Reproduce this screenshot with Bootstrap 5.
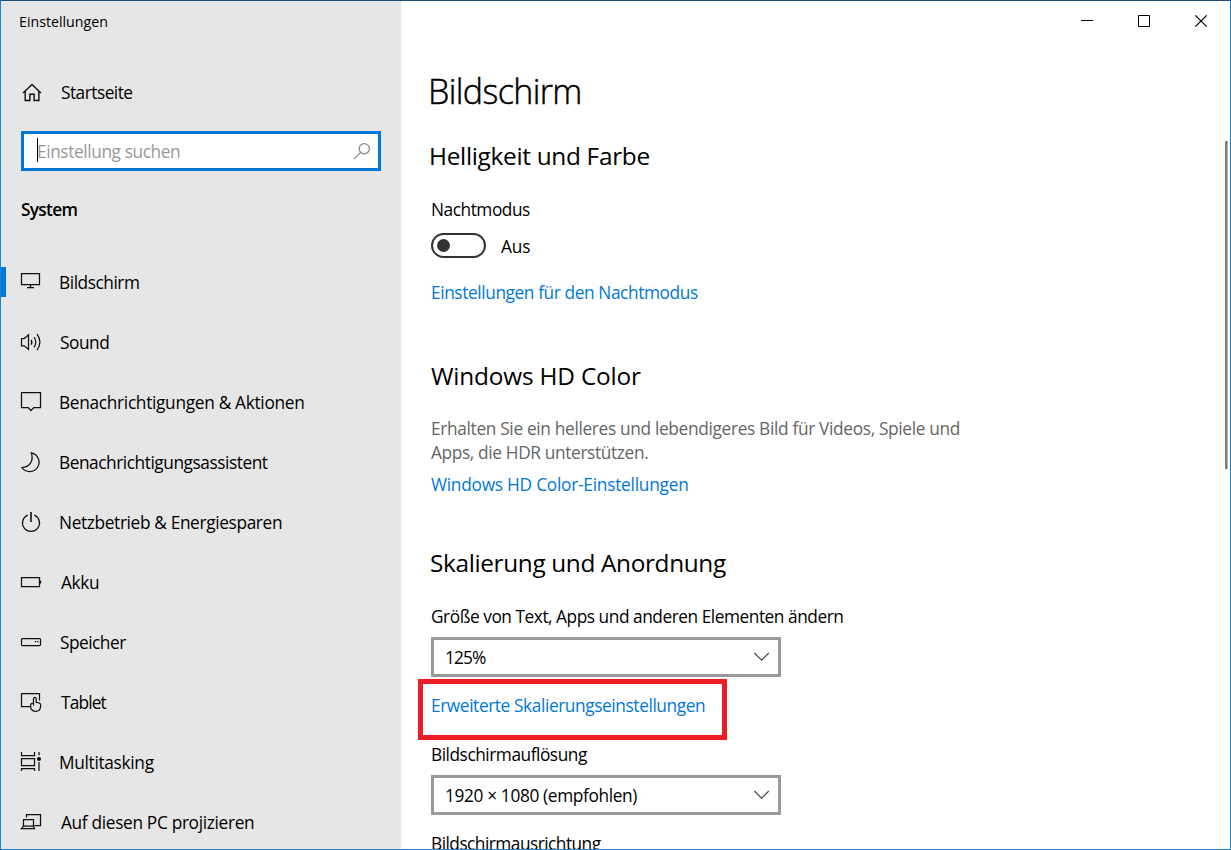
<!DOCTYPE html>
<html lang="de">
<head>
<meta charset="utf-8">
<meta name="viewport" content="width=device-width, initial-scale=1">
<title>Einstellungen</title>
<link href="https://cdn.jsdelivr.net/npm/bootstrap@5.3.0/dist/css/bootstrap.min.css" rel="stylesheet">
<style>
:root{--accent:#0078d7}
body{font-family:"Open Sans","Noto Sans",sans-serif;font-size:17.3px;line-height:24px;color:#000;background:#fff}
.win{width:1231px;height:850px;border:1px solid #1883d7;border-top-color:#1f4e79}
svg{fill:none;stroke:#111;stroke-width:1.25;display:block;flex:none}
.side{width:400px;background:#e6e6e6;flex:none}
.caption-text{font-size:14.2px;line-height:20px;padding:10.5px 0 0 18px}
.home{margin-top:48.5px;padding-left:19px;height:24px}
.search{margin:27px 20px 0;height:40px;border:3px solid var(--accent);color:#999}
.search .caret{width:1px;height:24px;background:#000;margin:-2px 0 0 13px}
.search .hint{margin-left:-1px;flex:1;padding-top:1px}
.group{font-weight:600;margin:27px 0 30px 20px}
.item{height:60px}
.item .bar{width:5px;height:30px;margin-right:14px;flex:none}
.item.active .bar{background:var(--accent)}
.item svg{margin-right:15px}
.item.n svg,.item.a svg{margin-right:16px}
.item.a svg{margin-right:17px}
.item span:last-child{padding-top:2px}
.content-col{padding-left:29px;min-width:0}
.ctl{height:40px}
h1{font-size:34px;line-height:46px;font-weight:300;letter-spacing:-.62px;margin:27px 0 26px -2px;-webkit-text-stroke:.45px #000}
h2{font-size:24.4px;line-height:32px;font-weight:400;margin:0}
.ln{height:24px;white-space:nowrap;padding-top:1px;margin-left:1px}
.n1{margin-left:1px}
.blue{color:var(--accent);text-decoration:none}
.muted{color:#666}
.sel{width:350px;height:40px;border:3px solid #999;margin-left:1px;padding:0 8px 0 11px}
.sel span{padding-top:2px}
.redbox{left:-13px;top:-14px;width:309px;height:61px;border:5px solid #ee1c24}
.toggle{width:55px;height:25px;border:2.5px solid #333;border-radius:13px;margin-left:1px;padding-left:3.5px}
.toggle i{width:13px;height:13px;border-radius:50%;background:#333}
.thumb{width:3px;height:328px;right:2px;top:140px;background:#7a7a7a;border-right:1px solid #b5b5b5}
.k02{letter-spacing:-.2px}.k24{letter-spacing:-.24px}.k28{letter-spacing:-.31px}.k31{letter-spacing:-.31px}.k33{letter-spacing:-.33px}.k36{letter-spacing:-.36px}
.k40{letter-spacing:-.4px}.k43{letter-spacing:-.45px}.k46{letter-spacing:-.46px}.k51{letter-spacing:-.51px}.k55{letter-spacing:-.52px}.k74{letter-spacing:-.7px}.k85{letter-spacing:-.85px}
</style>
</head>
<body class="overflow-hidden">
<div class="win d-flex position-relative overflow-hidden">
  <nav class="side">
    <div class="caption-text">Einstellungen</div>
    <div class="home d-flex"><svg width="24" height="24"><path d="M3 13L12 4.5L21 13M5.2 11.5V20.5H9.9V14.2H14.1V20.5H18.9V11.5" stroke-width="1.4"/></svg><span class="k51" style="margin:1px 0 0 17px">Startseite</span></div>
    <div class="search bg-white d-flex align-items-center"><span class="caret"></span><span class="hint k40">Einstellung suchen</span>
      <svg width="18" height="18" style="stroke:#8a8a8a;margin-right:7px"><circle cx="11.3" cy="6.7" r="5.1"/><path d="M7.6 10.4L1 17"/></svg></div>
    <div class="group k74">System</div>

    <div class="item active d-flex align-items-center"><span class="bar"></span><svg width="24" height="24"><path d="M1.5 3.5H19.5V14.5H1.5zM10.5 14.5V17M7 17.5H14"/></svg><span class="k43">Bildschirm</span></div>
    <div class="item n d-flex align-items-center"><span class="bar"></span><svg width="24" height="24"><path d="M1.5 8.5H4.2L8.5 4.8V19.5L4.2 15.8H1.5zM11 9.8Q12.8 12.2 11 14.7M14 7.2Q17.6 12.2 14 17.3M17 4.2Q22.9 12.2 17 20.2"/></svg><span class="k46">Sound</span></div>
    <div class="item d-flex align-items-center"><span class="bar"></span><svg width="24" height="24"><path d="M1.5 2.5H20.5V17.5H13.8L11 20.5L8.2 17.5H1.5z"/></svg><span class="k31">Benachrichtigungen &amp; Aktionen</span></div>
    <div class="item d-flex align-items-center"><span class="bar"></span><svg width="24" height="24"><path d="M11.3 2.9A9.4 9.4 0 1 1 1.9 17.5C9.5 17.3 14 11 11.3 2.9z"/></svg><span class="k43">Benachrichtigungsassistent</span></div>
    <div class="item d-flex align-items-center"><span class="bar"></span><svg width="24" height="24"><path d="M7.7 5.1A8.5 8.5 0 1 0 14.3 5.1"/><path d="M11 2V12" stroke-width="1.6"/></svg><span class="k36">Netzbetrieb &amp; Energiesparen</span></div>
    <div class="item a d-flex align-items-center"><span class="bar"></span><svg width="24" height="24"><path d="M1.5 7.5H19.5V16.5H1.5z"/><path d="M20.5 10.5V13.5"/></svg><span class="k33">Akku</span></div>
    <div class="item n d-flex align-items-center"><span class="bar"></span><svg width="24" height="24"><rect x="1.5" y="8.5" width="19" height="7" rx="1"/><path d="M14.8 11.5H16.2M17 11.5H18.4"/></svg><span class="k51">Speicher</span></div>
    <div class="item a d-flex align-items-center"><span class="bar"></span><svg width="24" height="24"><path d="M10 16.5H1.5V3.5H19.5V10.5"/><path d="M13.5 15.5V8.7Q13.7 7.3 14.8 7.3T16.2 8.7V12.3L19 12.9Q20.6 13.3 20.6 14.8V16.5Q20.3 21.3 15.8 21.3Q11.8 21.2 10.7 18V14.8Q10.7 13.3 13.3 13"/></svg><span class="k85">Tablet</span></div>
    <div class="item d-flex align-items-center"><span class="bar"></span><svg width="24" height="24"><path d="M1.5 2V5.5H14.5V2M1.5 8.5H14.5V15.5H1.5zM1.5 21V18.5H14.5V21M19 2V5.2M19 12V21"/><circle cx="19" cy="9" r="1.4" fill="#111"/></svg><span class="k31">Multitasking</span></div>
    <div class="item a d-flex align-items-center"><span class="bar"></span><svg width="24" height="24"><path d="M6.5 7.5V4.5H20.5V15.5H14.5M3.5 15.5V9.5H13.5V15.5M3.5 16.2L1.5 18.5H14.5L13.5 16.2M2.5 16.2H14"/></svg><span class="k33">Auf diesen PC projizieren</span></div>
  </nav>

  <main class="content-col flex-grow-1">
    <div class="ctl d-flex justify-content-end">
      <svg width="172" height="40" style="stroke:#000;stroke-width:1"><path d="M23 19.5H35M80.5 14.5H91.5V25.5H80.5z"/><path d="M137.3 14.3L148.7 25.7M148.7 14.3L137.3 25.7" stroke-width="1.2"/></svg>
    </div>
    <h1>Bildschirm</h1>
    <h2 class="k28" style="margin-left:-1px">Helligkeit und Farbe</h2>
    <div class="ln k46" style="margin-top:25px">Nachtmodus</div>
    <div class="d-flex align-items-center" style="margin-top:12px;height:25px"><span class="toggle d-flex align-items-center"><i></i></span><span class="k02" style="margin:3px 0 0 15px">Aus</span></div>
    <div class="ln" style="margin-top:22px"><a href="#" class="blue k40">Einstellungen für den Nachtmodus</a></div>

    <h2 class="k02 n1" style="margin-top:56px">Windows HD Color</h2>
    <div class="ln muted k33" style="margin-top:24px">Erhalten Sie ein helleres und lebendigeres Bild für Videos, Spiele und</div>
    <div class="ln muted k36">Apps, die HDR unterstützen.</div>
    <div class="ln" style="margin-top:8px"><a href="#" class="blue k24">Windows HD Color-Einstellungen</a></div>

    <h2 class="k36" style="margin-top:51px">Skalierung und Anordnung</h2>
    <div class="ln k46" style="margin-top:25px">Größe von Text, Apps und anderen Elementen ändern</div>
    <div class="sel d-flex align-items-center justify-content-between" style="margin-top:9px"><span class="k85">125%</span><svg width="18" height="12" style="stroke:#444"><path d="M2.4 2L9.6 9.2L16.8 2" stroke-width="1.1"/></svg></div>
    <div class="ln position-relative" style="margin-top:16px"><a href="#" class="blue k40">Erweiterte Skalierungseinstellungen</a><span class="redbox position-absolute"></span></div>
    <div class="ln k46" style="margin-top:25px">Bildschirmauflösung</div>
    <div class="sel d-flex align-items-center justify-content-between" style="margin-top:9px"><span class="k36">1920 × 1080 (empfohlen)</span><svg width="18" height="12" style="stroke:#444"><path d="M2.4 2L9.6 9.2L16.8 2" stroke-width="1.1"/></svg></div>
    <div class="ln k55" style="margin-top:16px">Bildschirmausrichtung</div>
  </main>
  <span class="thumb position-absolute"></span>
</div>
<script src="https://cdn.jsdelivr.net/npm/bootstrap@5.3.0/dist/js/bootstrap.bundle.min.js"></script>
</body>
</html>
